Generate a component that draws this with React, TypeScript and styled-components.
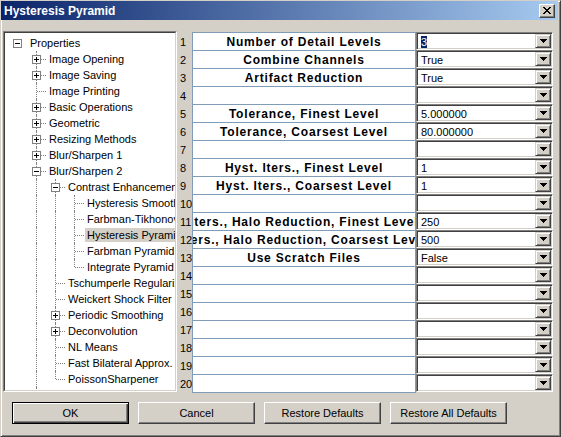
import React from "react";
import styled, { createGlobalStyle, css } from "styled-components";

const GlobalStyle = createGlobalStyle`
	html, body {
		margin: 0;
		padding: 0;
		background: #d4d0c8;
		overflow: hidden;
	}
	* {
		box-sizing: border-box;
	}
`;

type TreeItem = { label: string; level: number; toggle?: "plus" | "minus"; selected?: boolean };

const treeItems: TreeItem[] = [
	{ label: "Properties", level: 0, toggle: "minus" },
	{ label: "Image Opening", level: 1, toggle: "plus" },
	{ label: "Image Saving", level: 1, toggle: "plus" },
	{ label: "Image Printing", level: 1 },
	{ label: "Basic Operations", level: 1, toggle: "plus" },
	{ label: "Geometric", level: 1, toggle: "plus" },
	{ label: "Resizing Methods", level: 1, toggle: "plus" },
	{ label: "Blur/Sharpen 1", level: 1, toggle: "plus" },
	{ label: "Blur/Sharpen 2", level: 1, toggle: "minus" },
	{ label: "Contrast Enhancement", level: 2, toggle: "minus" },
	{ label: "Hysteresis Smoothing", level: 3 },
	{ label: "Farbman-Tikhonov", level: 3 },
	{ label: "Hysteresis Pyramid", level: 3, selected: true },
	{ label: "Farbman Pyramid", level: 3 },
	{ label: "Integrate Pyramid", level: 3 },
	{ label: "Tschumperle Regularization", level: 2 },
	{ label: "Weickert Shock Filter", level: 2 },
	{ label: "Periodic Smoothing", level: 2, toggle: "plus" },
	{ label: "Deconvolution", level: 2, toggle: "plus" },
	{ label: "NL Means", level: 2 },
	{ label: "Fast Bilateral Approx.", level: 2 },
	{ label: "PoissonSharpener", level: 2 },
	{ label: "Pixel Statistics", level: 1, toggle: "plus" },
	{ label: "Noise Removal", level: 1, toggle: "plus" },
];

// true when another item at `level` follows before the branch closes
const hasLaterSibling = (index: number, level: number) => {
	for (let j = index + 1; j < treeItems.length; j++) {
		if (treeItems[j].level < level) return false;
		if (treeItems[j].level === level) return true;
	}
	return false;
};

type Prop = { name: string; value: string; selected?: boolean; tail?: number };

const props: Prop[] = [
	{ name: "Number of Detail Levels", value: "3", selected: true },
	{ name: "Combine Channels", value: "True" },
	{ name: "Artifact Reduction", value: "True" },
	{ name: "", value: "" },
	{ name: "Tolerance, Finest Level", value: "5.000000" },
	{ name: "Tolerance, Coarsest Level", value: "80.000000" },
	{ name: "", value: "" },
	{ name: "Hyst. Iters., Finest Level", value: "1" },
	{ name: "Hyst. Iters., Coarsest Level", value: "1" },
	{ name: "", value: "" },
	{ name: "Hyst. Iters., Halo Reduction, Finest Level", value: "250", tail: 37 },
	{ name: "Hyst. Iters., Halo Reduction, Coarsest Level", value: "500", tail: 36 },
	{ name: "Use Scratch Files", value: "False" },
	{ name: "", value: "" },
	{ name: "", value: "" },
	{ name: "", value: "" },
	{ name: "", value: "" },
	{ name: "", value: "" },
	{ name: "", value: "" },
	{ name: "", value: "" },
];

const ToggleBox: React.FC<{ kind: "plus" | "minus" }> = ({ kind }) => (
	<Toggle width="9" height="9" viewBox="0 0 9 9" shapeRendering="crispEdges">
		<rect x="0.5" y="0.5" width="8" height="8" fill="#fff" stroke="#808080" />
		<path d="M2 4h5v1H2z" fill="#000" />
		{kind === "plus" && <path d="M4 2h1v5H4z" fill="#000" />}
	</Toggle>
);

const ArrowDown = () => (
	<svg width="7" height="4" viewBox="0 0 7 4" shapeRendering="crispEdges">
		<path d="M0 0h7v1H0zM1 1h5v1H1zM2 2h3v1H2zM3 3h1v1H3z" fill="#000" />
	</svg>
);

const CloseGlyph = () => (
	<svg width="8" height="7" viewBox="0 0 8 7" shapeRendering="crispEdges">
		<path
			d="M0 0h2v1H0zM6 0h2v1H6zM1 1h2v1H1zM5 1h2v1H5zM2 2h4v1H2zM3 3h2v1H3zM2 4h4v1H2zM1 5h2v1H1zM5 5h2v1H5zM0 6h2v1H0zM6 6h2v1H6z"
			fill="#000"
		/>
	</svg>
);

export default function App() {
	return (
		<>
			<GlobalStyle />
			<Window>
				<TitleBar>
					<Title>Hysteresis Pyramid</Title>
					<CloseButton>
						<CloseGlyph />
					</CloseButton>
				</TitleBar>
				<Body>
					<Main>
						<Tree>
							<TreeInner>
								{treeItems.map((item, i) => (
									<TreeRow key={i}>
										{Array.from({ length: item.level }).map((_, d) => (
											<Guide key={d} $line={d > 0 && hasLaterSibling(i, d)} />
										))}
										<Connector $root={item.level === 0} $last={!hasLaterSibling(i, item.level)}>
											{item.toggle && <ToggleBox kind={item.toggle} />}
										</Connector>
										<Label $selected={item.selected}>{item.label}</Label>
									</TreeRow>
								))}
							</TreeInner>
						</Tree>
						<Grid>
							{props.map((p, i) => (
								<React.Fragment key={i}>
									<NumCell>{i + 1}</NumCell>
									<NameCell>
										<NameText $tail={p.tail ?? 0}>{p.name}</NameText>
									</NameCell>
									<Combo>
										<ComboField>{p.selected ? <Selection>{p.value}</Selection> : p.value}</ComboField>
										<DropButton>
											<ArrowDown />
										</DropButton>
									</Combo>
								</React.Fragment>
							))}
						</Grid>
					</Main>
					<ButtonRow>
						<Button $default>OK</Button>
						<Button>Cancel</Button>
						<Button>Restore Defaults</Button>
						<Button>Restore All Defaults</Button>
					</ButtonRow>
				</Body>
			</Window>
		</>
	);
}

const Window = styled.div`
	width: 561px;
	height: 437px;
	display: flex;
	flex-direction: column;
	padding: 0 2px 0 0;

	background: #d4d0c8;
	border: 1px solid;
	border-color: #d4d0c8 #404040 #404040 #d4d0c8;
	box-shadow: inset 1px 1px #ffffff, inset -1px -1px #808080;

	font-family: "Liberation Sans", Arial, sans-serif;
	font-size: 11px;
	color: #000000;
`;

const TitleBar = styled.div`
	height: 19px;
	display: flex;
	align-items: center;
	justify-content: space-between;
	padding: 0 3px 0 3px;
	background: linear-gradient(90deg, #0a246a 0%, #a6caf0 100%);
`;

const Title = styled.span`
	font-weight: bold;
	font-size: 12px;
	color: #ffffff;
`;

const CloseButton = styled.div`
	width: 16px;
	height: 14px;
	display: flex;
	align-items: center;
	justify-content: center;
	background: #d4d0c8;
	border: 1px solid;
	border-color: #ffffff #404040 #404040 #ffffff;
	box-shadow: inset -1px -1px #808080;
`;

const Body = styled.div`
	display: flex;
	flex-direction: column;
	padding: 11px 0 0 2px;
`;

const Main = styled.div`
	display: flex;
	align-items: flex-start;
	height: 361px;
`;

const Tree = styled.div`
	width: 174px;
	height: 361px;
	border: 1px solid;
	border-color: #808080 #ffffff #ffffff #808080;
`;

const TreeInner = styled.div`
	height: 100%;
	padding-top: 2px;
	background: #ffffff;
	border: 1px solid;
	border-color: #404040 #d4d0c8 #d4d0c8 #404040;
	overflow: hidden;
`;

const TreeRow = styled.div`
	display: flex;
	align-items: center;
	height: 16px;
	padding-left: 8px;
	white-space: nowrap;
`;

const Guide = styled.span<{ $line: boolean }>`
	flex: none;
	position: relative;
	width: 19px;
	height: 16px;

	${(p) =>
		p.$line &&
		css`
			&::before {
				content: "";
				position: absolute;
				left: 4px;
				top: 0;
				bottom: 0;
				border-left: 1px dotted #808080;
			}
		`}
`;

const Connector = styled.span<{ $root: boolean; $last: boolean }>`
	flex: none;
	position: relative;
	width: 15px;
	height: 16px;

	${(p) =>
		!p.$root &&
		css`
			&::before {
				content: "";
				position: absolute;
				left: 4px;
				top: 0;
				height: ${p.$last ? 8 : 16}px;
				border-left: 1px dotted #808080;
			}
			&::after {
				content: "";
				position: absolute;
				left: 5px;
				top: 8px;
				width: 9px;
				border-top: 1px dotted #808080;
			}
		`}
`;

const Toggle = styled.svg`
	position: absolute;
	left: 0;
	top: 4px;
	z-index: 1;
`;

const Label = styled.span<{ $selected?: boolean }>`
	padding: 0 2px;
	line-height: 14px;
	background: ${(p) => (p.$selected ? "#d4d0c8" : "transparent")};
`;

const Grid = styled.div`
	display: grid;
	grid-template-columns: 15px 224px 137px;
	grid-auto-rows: 18px;
	margin-top: 1px;
`;

const NumCell = styled.div`
	display: flex;
	align-items: flex-end;
	padding: 0 0 2px 3px;
	line-height: 12px;
	white-space: nowrap;
`;

const NameCell = styled.div`
	height: 19px;
	display: flex;
	align-items: center;
	justify-content: center;
	overflow: hidden;
	background: #ffffff;
	border: 1px solid #7f9db9;
`;

const NameText = styled.span<{ $tail: number }>`
	flex: none;
	padding-right: ${(p) => p.$tail}px;
	white-space: nowrap;
	font-weight: bold;
	font-size: 12px;
	letter-spacing: 0.8px;
`;

const Combo = styled.div`
	height: 18px;
	display: flex;
	padding: 2px;
	background: #ffffff;
	border: 1px solid;
	border-color: #808080 #ffffff #ffffff #808080;
	box-shadow: inset 1px 1px #404040, inset -1px -1px #d4d0c8;
`;

const ComboField = styled.div`
	flex: 1;
	padding-left: 2px;
	line-height: 14px;
	white-space: nowrap;
`;

const Selection = styled.span`
	background: #0a246a;
	color: #ffffff;
`;

const DropButton = styled.div`
	flex: none;
	width: 16px;
	height: 14px;
	margin: -1px -1px 0 0;
	display: flex;
	align-items: center;
	justify-content: center;
	background: #d4d0c8;
	border: 1px solid;
	border-color: #d4d0c8 #404040 #404040 #d4d0c8;
	box-shadow: inset 1px 1px #ffffff, inset -1px -1px #808080;
`;

const ButtonRow = styled.div`
	display: flex;
	gap: 9px;
	margin-top: 10px;
	padding-left: 9px;
`;

const Button = styled.div<{ $default?: boolean }>`
	width: 117px;
	height: 22px;
	display: flex;
	align-items: center;
	justify-content: center;
	background: #d4d0c8;
	font-size: 11px;

	border: 1px solid;
	border-color: #ffffff #404040 #404040 #ffffff;
	box-shadow: inset -1px -1px #808080;

	${(p) =>
		p.$default &&
		css`
			border-color: #000000;
			box-shadow: inset 1px 1px #ffffff, inset -1px -1px #404040, inset -2px -2px #808080;
		`}
`;
